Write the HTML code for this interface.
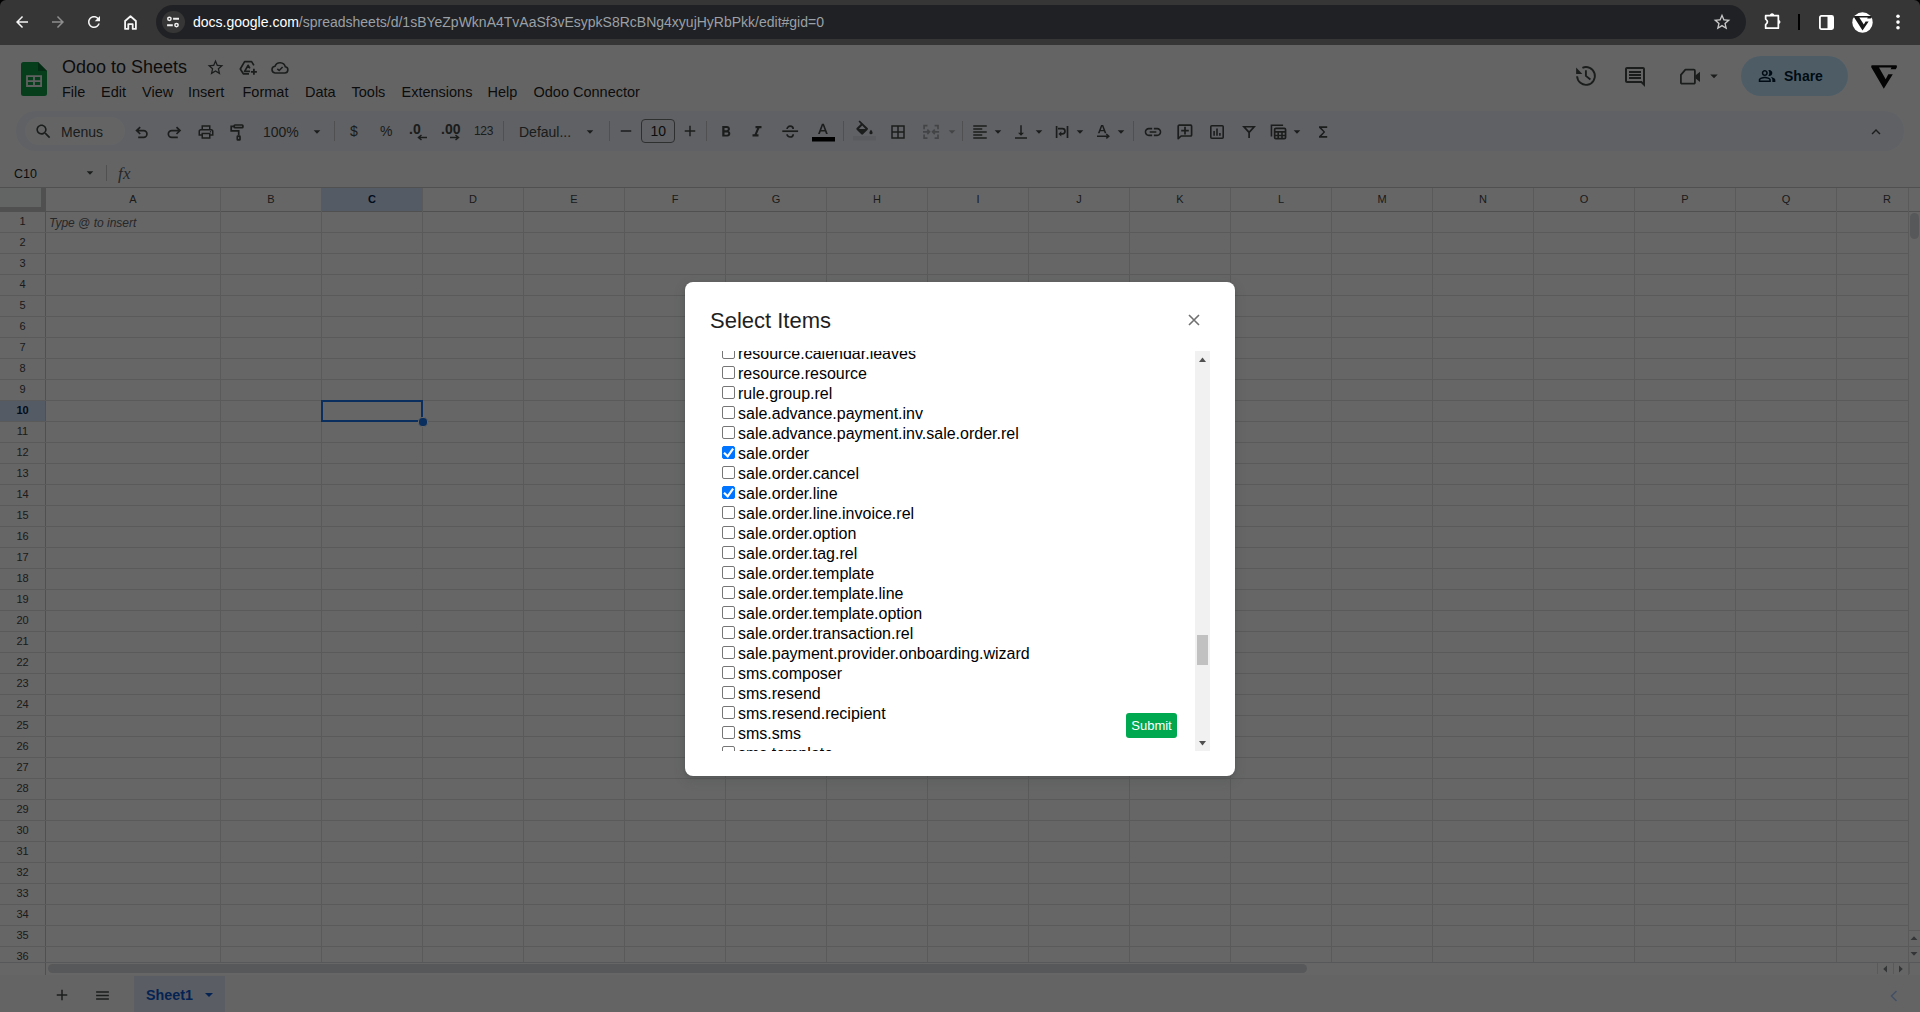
<!DOCTYPE html>
<html><head><meta charset="utf-8"><title>Odoo to Sheets</title>
<style>
*{box-sizing:border-box}
html,body{margin:0;padding:0}
body{width:1920px;height:1012px;overflow:hidden;position:relative;font-family:"Liberation Sans",sans-serif;background:#000}
.a{position:absolute}
svg{display:block}
.chrome{left:0;top:0;width:1920px;height:45px;background:#363636;border-radius:6px 6px 0 0}
.url{left:156px;top:5px;width:1590px;height:34px;border-radius:17px;background:#202124}
.app{left:0;top:44px;width:1920px;height:968px;background:#f9fbfd;overflow:hidden}
.ov{left:0;top:45px;width:1920px;height:967px;background:rgba(0,0,0,.6)}
.menu{top:44px;font-size:14px;color:#1f1f1f;line-height:20px}
.ic{fill:#444746}
.grid{left:0;top:187px;width:1908px;height:775px;overflow:hidden;background:#fff}
.ch{top:1px;height:23px;font-size:11px;color:#444;text-align:center;line-height:24px}
.rh{left:0;width:45px;height:20px;font-size:11px;color:#444;text-align:center;line-height:21px}
.dlg{left:685px;top:282px;width:550px;height:494px;background:#fff;border-radius:8px;box-shadow:0 1px 3px 0 rgba(60,64,67,.3),0 4px 8px 3px rgba(60,64,67,.15)}
.row{left:33px;height:20px;font-size:16px;color:#000;line-height:20px;white-space:nowrap}
.cb{position:absolute;left:4px;top:3px;width:13px;height:13px;border:1px solid #767676;border-radius:2px;background:#fff}
.cb.on{background:#0075ff;border-color:#0075ff}
.row span{position:absolute;left:20px;top:1px}
</style></head><body>
<!-- CHROME -->
<div class="a chrome">
  <svg class="a" style="left:13px;top:13px" width="18" height="18" viewBox="0 0 24 24"><path fill="#f5f5f5" d="M20 11H7.83l5.59-5.59L12 4l-8 8 8 8 1.41-1.41L7.83 13H20v-2z"/></svg>
  <svg class="a" style="left:49px;top:13px" width="18" height="18" viewBox="0 0 24 24"><path fill="#8e8e8e" d="M12 4l-1.41 1.41L16.17 11H4v2h12.17l-5.58 5.59L12 20l8-8z"/></svg>
  <svg class="a" style="left:85px;top:13px" width="18" height="18" viewBox="0 0 24 24"><path fill="#f5f5f5" d="M17.65 6.35C16.2 4.9 14.21 4 12 4c-4.42 0-7.99 3.58-7.99 8s3.57 8 7.99 8c3.73 0 6.84-2.55 7.73-6h-2.08c-.82 2.33-3.04 4-5.65 4-3.31 0-6-2.69-6-6s2.69-6 6-6c1.66 0 3.14.69 4.22 1.78L13 11h7V4l-2.35 2.35z"/></svg>
  <svg class="a" style="left:123.5px;top:14.5px" width="13" height="15" viewBox="0 0 13 15"><path fill="none" stroke="#f5f5f5" stroke-width="1.8" stroke-linejoin="round" d="M1.1 13.9V6L6.5 1.3 11.9 6v7.9H8.7V9.2H4.3v4.7z"/></svg>
  <div class="a url">
    <div class="a" style="left:6.3px;top:5.6px;width:22.4px;height:22.4px;border-radius:11.2px;background:#363636"></div>
    <svg class="a" style="left:10px;top:10px" width="14" height="14" viewBox="0 0 14 14"><g fill="none" stroke="#f0f0f0"><circle cx="3.4" cy="3.8" r="1.65" stroke-width="1.5"/><circle cx="10.5" cy="10.1" r="1.65" stroke-width="1.5"/><path stroke-width="2" d="M7.1 3.8H13M1.1 10.2H6.8"/></g></svg>
    <div class="a" style="left:37px;top:0;line-height:34px;font-size:14px;color:#9aa0a6;white-space:nowrap"><span style="color:#fff">docs.google.com</span>/spreadsheets/d/1sBYeZpWknA4TvAaSf3vEsypkS8RcBNg4xyujHyRbPkk/edit#gid=0</div>
    <svg class="a" style="left:1556px;top:6.5px" width="20" height="20" viewBox="0 0 24 24"><path fill="#c8c8c8" d="M22 9.24l-7.19-.62L12 2 9.19 8.63 2 9.24l5.46 4.73L5.82 21 12 17.27 18.18 21l-1.63-7.03L22 9.24zM12 15.4l-3.76 2.27 1-4.28-3.32-2.88 4.38-.38L12 6.1l1.71 4.04 4.38.38-3.32 2.88 1 4.28L12 15.4z"/></svg>
  </div>
  <svg class="a" style="left:1763px;top:12px" width="20" height="20" viewBox="0 0 20 20"><path fill="none" stroke="#fff" stroke-width="1.75" stroke-linejoin="round" d="M2.65 3.65H15.35V16.15H2.65V12.6Q6.2 9.85 2.65 7.1Z"/><path fill="#fff" d="M6.8 4A2.25 2.8 0 0 1 11.3 4ZM15.2 7.9A2.3 2.1 0 0 1 15.2 12.1Z"/></svg>
  <div class="a" style="left:1798px;top:14px;width:2px;height:16px;background:#000"></div>
  <svg class="a" style="left:1818.5px;top:14.7px" width="15" height="15" viewBox="0 0 15 15"><rect x="0.9" y="0.9" width="13.2" height="13.2" rx="1.5" fill="none" stroke="#fff" stroke-width="1.8"/><rect x="8.5" y="1" width="5.6" height="13" fill="#fff"/></svg>
  <svg class="a" style="left:1851.5px;top:11.8px" width="21" height="21" viewBox="0 0 21 21"><circle cx="10.5" cy="10.5" r="10.2" fill="#fff"/><g transform="translate(1.9 4) scale(0.68 0.61) translate(-11.1 -9.2)"><path fill="#1a1a1a" d="M11.6 9.2H36.6L37 10.9 35.8 13.2H30.6L31.5 11.5H19L25.7 23.3 28.3 18.2H32.8L23.8 32.8 11.1 11z"/></g></svg>
  <svg class="a" style="left:1895px;top:14px" width="6" height="16" viewBox="0 0 6 16"><circle cx="3" cy="2.3" r="1.8" fill="#fff"/><circle cx="3" cy="8.1" r="1.8" fill="#fff"/><circle cx="3" cy="13.7" r="1.8" fill="#fff"/></svg>
</div>

<!-- APP -->
<div class="a" style="left:0;top:45px;width:1920px;height:967px;background:#f9fbfd"></div>
<svg class="a" style="left:21px;top:62px" width="26" height="34" viewBox="0 0 26 34"><path fill="#109c48" d="M2.5 0H17l9 9v22.5a2.5 2.5 0 0 1-2.5 2.5h-21A2.5 2.5 0 0 1 0 31.5v-29A2.5 2.5 0 0 1 2.5 0z"/><path fill="#0a6b30" d="M17 0v9h9z"/><path fill="none" stroke="#f1f1f1" stroke-width="1.8" d="M6 14.2h14.1v9.8H6zM6 19.1h14.1M13 14.2v9.8"/></svg>
<div class="a" style="left:62px;top:58px;font-size:18px;line-height:18px;color:#1f1f1f;white-space:nowrap">Odoo to Sheets</div>
<svg class="a" style="left:206.3px;top:58.3px" width="19" height="19" viewBox="0 0 24 24"><path fill="#444746" d="M22 9.24l-7.19-.62L12 2 9.19 8.63 2 9.24l5.46 4.73L5.82 21 12 17.27 18.18 21l-1.63-7.03L22 9.24zM12 15.4l-3.76 2.27 1-4.28-3.32-2.88 4.38-.38L12 6.1l1.71 4.04 4.38.38-3.32 2.88 1 4.28L12 15.4z"/></svg>
<svg class="a" style="left:239px;top:59px" width="19" height="18" viewBox="0 0 19 18"><path fill="none" stroke="#444746" stroke-width="1.7" stroke-linejoin="round" d="M10 14.8H4.3L1.3 10 5.6 2.6H12.6L14.9 6.4M11 12.4H5.6L9.2 6.3 10.9 9.3"/><path stroke="#444746" stroke-width="1.8" d="M14.9 9.8v6M11.9 12.8h6"/></svg>
<svg class="a" style="left:270px;top:61px" width="20" height="14" viewBox="0 0 20 14"><path fill="none" stroke="#444746" stroke-width="1.6" d="M5 11.95H14.8A3.1 3.1 0 0 0 15.3 5.8A5.4 5.4 0 0 0 5 5.2A3.4 3.4 0 0 0 5 11.95Z"/><path fill="none" stroke="#444746" stroke-width="1.6" d="M7.3 7.8l1.9 1.7 3.4-3.5"/></svg>
<div class="a" style="left:62px;top:82px;font-size:14.5px;line-height:20px;color:#1f1f1f;white-space:nowrap">File</div>
<div class="a" style="left:101px;top:82px;font-size:14.5px;line-height:20px;color:#1f1f1f;white-space:nowrap">Edit</div>
<div class="a" style="left:142px;top:82px;font-size:14.5px;line-height:20px;color:#1f1f1f;white-space:nowrap">View</div>
<div class="a" style="left:188px;top:82px;font-size:14.5px;line-height:20px;color:#1f1f1f;white-space:nowrap">Insert</div>
<div class="a" style="left:242.5px;top:82px;font-size:14.5px;line-height:20px;color:#1f1f1f;white-space:nowrap">Format</div>
<div class="a" style="left:305px;top:82px;font-size:14.5px;line-height:20px;color:#1f1f1f;white-space:nowrap">Data</div>
<div class="a" style="left:351.5px;top:82px;font-size:14.5px;line-height:20px;color:#1f1f1f;white-space:nowrap">Tools</div>
<div class="a" style="left:401.5px;top:82px;font-size:14.5px;line-height:20px;color:#1f1f1f;white-space:nowrap">Extensions</div>
<div class="a" style="left:487.5px;top:82px;font-size:14.5px;line-height:20px;color:#1f1f1f;white-space:nowrap">Help</div>
<div class="a" style="left:533.5px;top:82px;font-size:14.5px;line-height:20px;color:#1f1f1f;white-space:nowrap">Odoo Connector</div>
<svg class="a" style="left:1574px;top:64px" width="24" height="24" viewBox="0 0 24 24"><path fill="none" stroke="#444746" stroke-width="1.9" d="M3.1 12.3A8.9 8.9 0 1 0 8.4 3.8M11.9 6.2v5.7l4.5 3.6"/><path fill="#444746" d="M2.1 3.6L2.1 10H8.4z"/></svg>
<svg class="a" style="left:1623px;top:65px" width="24" height="24" viewBox="0 0 24 24"><path fill="#444746" d="M21.99 4c0-1.1-.89-2-1.99-2H4c-1.1 0-2 .9-2 2v12c0 1.1.9 2 2 2h14l4 4-.01-18zM20 4v13.17L18.83 16H4V4h16zM6 12h12v2H6zm0-3h12v2H6zm0-3h12v2H6z"/></svg>
<svg class="a" style="left:1679px;top:67px" width="22" height="18" viewBox="0 0 22 18"><path fill="none" stroke="#444746" stroke-width="1.8" stroke-linejoin="round" d="M1.9 7.9L6.4 2.65H14.9A1 1 0 0 1 15.9 3.65V15.7A1 1 0 0 1 14.9 16.7H2.9A1 1 0 0 1 1.9 15.7Z"/><path fill="#444746" d="M16.3 8.6L21 4.7V15.1L16.3 11.2Z"/></svg>
<svg class="a" style="left:1705px;top:67px" width="18" height="18" viewBox="0 0 24 24"><path fill="#444746" d="M7 10l5 5 5-5z"/></svg>
<div class="a" style="left:1741px;top:56px;width:107px;height:40px;border-radius:20px;background:#c2e7ff"></div>
<svg class="a" style="left:1758.1px;top:66.9px" width="18.1" height="18.1" viewBox="0 0 24 24"><path fill="#001d35" d="M16.67 13.13C18.04 14.06 19 15.32 19 17v3h4v-3c0-2.18-3.57-3.47-6.33-3.87zM15 12c2.21 0 4-1.79 4-4s-1.79-4-4-4c-.47 0-.91.1-1.33.24C14.5 5.27 15 6.58 15 8s-.5 2.73-1.33 3.76c.42.14.86.24 1.33.24zm-6 0c2.21 0 4-1.79 4-4s-1.79-4-4-4-4 1.79-4 4 1.79 4 4 4zm0-6c1.1 0 2 .9 2 2s-.9 2-2 2-2-.9-2-2 .9-2 2-2zm0 7c-2.67 0-8 1.34-8 4v3h16v-3c0-2.66-5.33-4-8-4zm6 5H3v-.99C3.2 16.29 6.3 15 9 15s5.8 1.29 6 2v1z"/></svg>
<div class="a" style="left:1784px;top:66px;font-size:14px;line-height:20px;color:#001d35;font-weight:bold;white-space:nowrap">Share</div>
<svg class="a" style="left:1860px;top:56px" width="50" height="40" viewBox="0 0 50 40"><path fill="#0c0c0c" d="M11.6 9.2H36.6L37 10.9 35.8 13.2H30.6L31.5 11.5H19L25.7 23.3 28.3 18.2H32.8L23.8 32.8 11.1 11z"/></svg>
<div class="a" style="left:16px;top:111px;width:1888px;height:40px;border-radius:20px;background:#edf2fa"></div>
<div class="a" style="left:25px;top:117px;width:100px;height:28px;border-radius:14px;background:#f9fbfd"></div>
<svg class="a" style="left:33.5px;top:121.5px" width="19" height="19" viewBox="0 0 24 24"><path fill="#444746" d="M15.5 14h-.79l-.28-.27C15.41 12.59 16 11.11 16 9.5 16 5.91 13.09 3 9.5 3S3 5.91 3 9.5 5.91 16 9.5 16c1.61 0 3.09-.59 4.23-1.57l.27.28v.79l5 4.99L20.49 19l-4.99-5zm-6 0C7.01 14 5 11.99 5 9.5S7.01 5 9.5 5 14 7.01 14 9.5 11.99 14 9.5 14z"/></svg>
<div class="a" style="left:61px;top:124.5px;font-size:14px;line-height:14px;color:#444746;white-space:nowrap;">Menus</div>
<svg class="a" style="left:134px;top:124px" width="16" height="16" viewBox="0 0 16 16"><path fill="none" stroke="#444746" stroke-width="1.7" d="M6.2 3.2L2.6 6.6 6.2 10M2.6 6.6H9.6A3.35 3.35 0 0 1 9.6 13.3H4.2"/></svg>
<svg class="a" style="left:166px;top:124px" width="16" height="16" viewBox="0 0 16 16"><path fill="none" stroke="#444746" stroke-width="1.7" d="M10.5 3.2L14 6.6 10.5 10M14 6.6H5.7A3.35 3.35 0 0 0 5.7 13.3H11.8"/></svg>
<svg class="a" style="left:197.0px;top:123.0px" width="18" height="18" viewBox="0 0 24 24"><path fill="#444746" d="M19 8h-1V3H6v5H5c-1.66 0-3 1.34-3 3v6h4v4h12v-4h4v-6c0-1.66-1.34-3-3-3zM8 5h8v3H8V5zm8 14H8v-4h8v4zm4-4h-2v-2H6v2H4v-4c0-.55.45-1 1-1h14c.55 0 1 .45 1 1v4z"/><circle cx="18" cy="11.5" r="1" fill="#444746"/></svg>
<svg class="a" style="left:230px;top:123px" width="15" height="19" viewBox="0 0 15 19"><rect x="4.2" y="2" width="8.7" height="2.7" rx="0.8" fill="none" stroke="#444746" stroke-width="1.7"/><path fill="none" stroke="#444746" stroke-width="1.7" d="M4.2 3.3H1.2V7.9H8.7V12.3"/><rect x="7.3" y="13.2" width="2.7" height="3.7" rx="0.5" fill="none" stroke="#444746" stroke-width="1.7"/></svg>
<div class="a" style="left:263px;top:125px;font-size:14px;line-height:14px;color:#444746;white-space:nowrap;">100%</div>
<svg class="a" style="left:309.0px;top:124px" width="16" height="16" viewBox="0 0 24 24"><path fill="#444746" d="M7 9.5l5 5 5-5z"/></svg>
<div class="a" style="left:334px;top:121px;width:1px;height:20px;background:#c7c7c7"></div>
<div class="a" style="left:350px;top:124px;font-size:14px;line-height:14px;color:#444746;white-space:nowrap;">$</div>
<div class="a" style="left:380px;top:124px;font-size:14px;line-height:14px;color:#444746;white-space:nowrap;">%</div>
<div class="a" style="left:409px;top:122px;font-size:14px;line-height:14px;color:#444746;white-space:nowrap;font-weight:bold">.0</div>
<svg class="a" style="left:417px;top:134px" width="10" height="7" viewBox="0 0 10 7"><path fill="none" stroke="#444746" stroke-width="1.5" d="M10 3.5H2M4.5 1L1.5 3.5 4.5 6"/></svg>
<div class="a" style="left:441px;top:122px;font-size:14px;line-height:14px;color:#444746;white-space:nowrap;font-weight:bold">.00</div>
<svg class="a" style="left:450px;top:134px" width="10" height="7" viewBox="0 0 10 7"><path fill="none" stroke="#444746" stroke-width="1.5" d="M0 3.5h8M5.5 1l3 2.5-3 2.5"/></svg>
<div class="a" style="left:474px;top:125px;font-size:12px;line-height:12px;color:#444746;white-space:nowrap;letter-spacing:-.3px">123</div>
<div class="a" style="left:503px;top:121px;width:1px;height:20px;background:#c7c7c7"></div>
<div class="a" style="left:519px;top:124.5px;font-size:14px;line-height:14px;color:#444746;white-space:nowrap;">Defaul...</div>
<svg class="a" style="left:582.0px;top:124px" width="16" height="16" viewBox="0 0 24 24"><path fill="#444746" d="M7 9.5l5 5 5-5z"/></svg>
<div class="a" style="left:609px;top:121px;width:1px;height:20px;background:#c7c7c7"></div>
<svg class="a" style="left:617.0px;top:122.0px" width="18" height="18" viewBox="0 0 24 24"><path fill="#444746" d="M19 13H5v-2h14v2z"/></svg>
<div class="a" style="left:641px;top:119px;width:34px;height:24px;border:1px solid #747775;border-radius:4px"></div>
<div class="a" style="left:650.5px;top:124.2px;font-size:14px;line-height:14px;color:#1f1f1f;white-space:nowrap;">10</div>
<svg class="a" style="left:681.0px;top:122.0px" width="18" height="18" viewBox="0 0 24 24"><path fill="#444746" d="M19 13h-6v6h-2v-6H5v-2h6V5h2v6h6v2z"/></svg>
<div class="a" style="left:706px;top:121px;width:1px;height:20px;background:#c7c7c7"></div>
<svg class="a" style="left:717.0px;top:123.0px" width="18" height="18" viewBox="0 0 24 24"><path fill="#444746" d="M15.6 10.79c.97-.67 1.65-1.77 1.65-2.79 0-2.26-1.75-4-4-4H7v14h7.04c2.09 0 3.71-1.7 3.71-3.79 0-1.52-.86-2.82-2.15-3.42zM10 6.5h3c.83 0 1.5.67 1.5 1.5s-.67 1.5-1.5 1.5h-3v-3zm3.5 9H10v-3h3.5c.83 0 1.5.67 1.5 1.5s-.67 1.5-1.5 1.5z"/></svg>
<svg class="a" style="left:748.0px;top:123.0px" width="18" height="18" viewBox="0 0 24 24"><path fill="#444746" d="M10 4v3h2.21l-3.42 8H6v3h8v-3h-2.21l3.42-8H18V4z"/></svg>
<svg class="a" style="left:782px;top:123px" width="17" height="18" viewBox="0 0 17 18"><path fill="none" stroke="#444746" stroke-width="1.7" d="M0.3 8.2h15.8"/><path fill="none" stroke="#444746" stroke-width="1.7" d="M5.1 6a3.05 2.8 0 0 1 6.1 0M5.1 11.2a3.05 2.8 0 0 0 6.1 0"/></svg>
<svg class="a" style="left:812px;top:121px" width="23" height="21" viewBox="0 0 23 21"><path fill="#444746" d="M9.9 2.8h2L15.8 13h-1.8l-0.95-2.6H8.75L7.8 13H6zM9.3 8.9h3.2L10.9 4.5z"/><rect x="0" y="16" width="23" height="4.5" fill="#000"/></svg>
<div class="a" style="left:843px;top:121px;width:1px;height:20px;background:#c7c7c7"></div>
<svg class="a" style="left:853px;top:120px" width="23" height="21" viewBox="0 0 23 21"><path transform="translate(2.5 0)" fill="#444746" d="M4.2 0.4L3 1.6 5.3 3.9 1.2 8a1.2 1.2 0 0 0 0 1.7l4.6 4.6a1.2 1.2 0 0 0 1.7 0l4.6-4.6a1.2 1.2 0 0 0 0-1.7zM3.4 8.9l3.3-3.3 3.3 3.3zM15.5 9.8s-1.6 1.8-1.6 2.9a1.6 1.6 0 0 0 3.2 0c0-1.1-1.6-2.9-1.6-2.9z"/><rect x="0" y="16" width="23" height="4.5" fill="#e0e4ea"/></svg>
<svg class="a" style="left:889.0px;top:123.0px" width="18" height="18" viewBox="0 0 24 24"><path fill="#444746" d="M3 3v18h18V3H3zm8 16H5v-6h6v6zm0-8H5V5h6v6zm8 8h-6v-6h6v6zm0-8h-6V5h6v6z"/></svg>
<svg class="a" style="left:921px;top:123px" width="20" height="18" viewBox="0 0 20 18"><path fill="none" stroke="#a8abb0" stroke-width="1.7" d="M6.5 2.6H3.1V6.3M3.1 11.4V15.1H6.5M13.6 2.6H17V6.3M17 11.4V15.1H13.6M2 8.85H8.3M6.3 6.6L8.5 8.85 6.3 11.1M18.1 8.85H11.8M13.8 6.6L11.6 8.85 13.8 11.1"/></svg>
<svg class="a" style="left:944.0px;top:124px" width="16" height="16" viewBox="0 0 24 24"><path fill="#a8abb0" d="M7 9.5l5 5 5-5z"/></svg>
<div class="a" style="left:962px;top:121px;width:1px;height:20px;background:#c7c7c7"></div>
<svg class="a" style="left:971px;top:123px" width="18" height="18" viewBox="0 0 24 24"><path fill="#444746" d="M15 15H3v2h12v-2zm0-8H3v2h12V7zM3 13h18v-2H3v2zm0 8h18v-2H3v2zM3 3v2h18V3H3z"/></svg>
<svg class="a" style="left:989.5px;top:124px" width="16" height="16" viewBox="0 0 24 24"><path fill="#444746" d="M7 9.5l5 5 5-5z"/></svg>
<svg class="a" style="left:1012.0px;top:123.0px" width="18" height="18" viewBox="0 0 24 24"><path fill="#444746" d="M16 13h-3V3h-2v10H8l4 4 4-4zM4 19v2h16v-2H4z"/></svg>
<svg class="a" style="left:1031.0px;top:124px" width="16" height="16" viewBox="0 0 24 24"><path fill="#444746" d="M7 9.5l5 5 5-5z"/></svg>
<svg class="a" style="left:1054px;top:124px" width="16" height="16" viewBox="0 0 16 16"><path fill="none" stroke="#444746" stroke-width="1.7" d="M2.6 1.9V13.9M13.5 1.9V13.9M4 4.7H8.4A2.6 2.6 0 0 1 8.4 9.9H6.5"/><path fill="#444746" d="M4.4 9.9L7.3 7.2V12.6Z"/></svg>
<svg class="a" style="left:1072.0px;top:124px" width="16" height="16" viewBox="0 0 24 24"><path fill="#444746" d="M7 9.5l5 5 5-5z"/></svg>
<svg class="a" style="left:1096px;top:124px" width="15" height="17" viewBox="0 0 15 17"><path fill="#444746" d="M5.1 1H7.2L10.4 9.3H8.7L8 7.3H4.3L3.6 9.3H1.9ZM4.8 5.9H7.5L6.15 2.3Z"/><path fill="none" stroke="#444746" stroke-width="1.5" d="M1 12.2H12.5M10.3 10L12.8 12.2 10.3 14.4"/></svg>
<svg class="a" style="left:1113.0px;top:124px" width="16" height="16" viewBox="0 0 24 24"><path fill="#444746" d="M7 9.5l5 5 5-5z"/></svg>
<div class="a" style="left:1133px;top:121px;width:1px;height:20px;background:#c7c7c7"></div>
<svg class="a" style="left:1143.0px;top:122.0px" width="20" height="20" viewBox="0 0 24 24"><path fill="#444746" d="M3.9 12c0-1.71 1.39-3.1 3.1-3.1h4V7H7c-2.76 0-5 2.24-5 5s2.24 5 5 5h4v-1.9H7c-1.71 0-3.1-1.39-3.1-3.1zM8 13h8v-2H8v2zm9-6h-4v1.9h4c1.71 0 3.1 1.39 3.1 3.1s-1.39 3.1-3.1 3.1h-4V17h4c2.76 0 5-2.24 5-5s-2.24-5-5-5z"/></svg>
<svg class="a" style="left:1177px;top:124px" width="16" height="16" viewBox="0 0 16 16"><path fill="none" stroke="#444746" stroke-width="1.7" stroke-linejoin="round" d="M1.2 14.7V2.2A1 1 0 0 1 2.2 1.2H13.6A1 1 0 0 1 14.6 2.2V11A1 1 0 0 1 13.6 12H4.1z"/><path stroke="#444746" stroke-width="1.7" d="M8 2.8v7.6M4.2 6.6h7.6"/></svg>
<svg class="a" style="left:1210px;top:125px" width="14" height="14" viewBox="0 0 14 14"><rect x="0.8" y="0.8" width="12.4" height="12.4" rx="1" fill="none" stroke="#444746" stroke-width="1.6"/><path fill="#444746" d="M3.3 6h1.6v4.8H3.3zM6.2 3.6h1.6v7.2H6.2zM9.1 8h1.6v2.8H9.1z"/></svg>
<svg class="a" style="left:1242px;top:125px" width="14" height="14" viewBox="0 0 14 14"><path fill="none" stroke="#444746" stroke-width="1.7" d="M1.95 1.75h10.3L7.1 7.4zM7.1 7v5.9"/></svg>
<svg class="a" style="left:1270px;top:123px" width="17" height="18" viewBox="0 0 17 18"><path fill="none" stroke="#444746" stroke-width="1.6" d="M1.45 13.4V2.25H13.1"/><rect x="4.65" y="5.35" width="10.9" height="10.3" rx="1.2" fill="none" stroke="#444746" stroke-width="1.7"/><path stroke="#444746" stroke-width="1.6" d="M4.65 8.9h10.9M4.65 12.5h10.9M8.2 8.9v6.7M12 8.9v6.7"/></svg>
<svg class="a" style="left:1289.0px;top:124px" width="16" height="16" viewBox="0 0 24 24"><path fill="#444746" d="M7 9.5l5 5 5-5z"/></svg>
<svg class="a" style="left:1315px;top:124px" width="16" height="16" viewBox="0 0 16 16"><path fill="#444746" d="M12.2 2.2H4v1.6l4.4 4.2L4 12.2v1.6h8.2v-1.7H6.6l3.6-4.1-3.6-4.1h5.6z"/></svg>
<svg class="a" style="left:1867.0px;top:123.0px" width="18" height="18" viewBox="0 0 24 24"><path fill="#444746" d="M12 8l-6 6 1.41 1.41L12 10.83l4.59 4.58L18 14z"/></svg>
<div class="a" style="left:14px;top:167.5px;font-size:12.5px;line-height:12.5px;color:#1f1f1f;white-space:nowrap;">C10</div>
<svg class="a" style="left:82.0px;top:165px" width="16" height="16" viewBox="0 0 24 24"><path fill="#444746" d="M7 9.5l5 5 5-5z"/></svg>
<div class="a" style="left:106px;top:165px;width:1px;height:16px;background:#c7c7c7"></div>
<div class="a" style="left:118px;top:165px;font-size:17px;line-height:17px;color:#5f6368;white-space:nowrap;font-family:'Liberation Serif',serif;font-style:italic;letter-spacing:0.3px">fx</div>
<div class="a" style="left:0;top:187px;width:1920px;height:788px;background:#fff"></div>
<div class="a" style="left:0;top:188px;width:41px;height:19px;background:#f8f9fa"></div>
<div class="a" style="left:322px;top:188px;width:100px;height:23px;background:#d3e3fd"></div>
<div class="a" style="left:0;top:401px;width:45px;height:20px;background:#d3e3fd"></div>
<div class="a" style="left:41px;top:188px;width:4px;height:23px;background:#c7c7c7"></div>
<div class="a" style="left:0;top:207px;width:45px;height:4px;background:#c7c7c7"></div>
<svg class="a" style="left:0px;top:187px" width="1920" height="788" viewBox="0 0 1920 788"><rect x="0" y="0" width="1920" height="1" fill="#c7c7c7"/><rect x="0" y="24" width="1920" height="1" fill="#c7c7c7"/><rect x="45" y="1" width="1" height="774" fill="#e1e1e1"/><rect x="220" y="1" width="1" height="774" fill="#e1e1e1"/><rect x="321" y="1" width="1" height="774" fill="#e1e1e1"/><rect x="422" y="1" width="1" height="774" fill="#e1e1e1"/><rect x="523" y="1" width="1" height="774" fill="#e1e1e1"/><rect x="624" y="1" width="1" height="774" fill="#e1e1e1"/><rect x="725" y="1" width="1" height="774" fill="#e1e1e1"/><rect x="826" y="1" width="1" height="774" fill="#e1e1e1"/><rect x="927" y="1" width="1" height="774" fill="#e1e1e1"/><rect x="1028" y="1" width="1" height="774" fill="#e1e1e1"/><rect x="1129" y="1" width="1" height="774" fill="#e1e1e1"/><rect x="1230" y="1" width="1" height="774" fill="#e1e1e1"/><rect x="1331" y="1" width="1" height="774" fill="#e1e1e1"/><rect x="1432" y="1" width="1" height="774" fill="#e1e1e1"/><rect x="1533" y="1" width="1" height="774" fill="#e1e1e1"/><rect x="1634" y="1" width="1" height="774" fill="#e1e1e1"/><rect x="1735" y="1" width="1" height="774" fill="#e1e1e1"/><rect x="1836" y="1" width="1" height="774" fill="#e1e1e1"/><rect x="45" y="1" width="1" height="787" fill="#c7c7c7"/><rect x="1908" y="1" width="1" height="787" fill="#e1e1e1"/><rect x="0" y="45" width="1908" height="1" fill="#e1e1e1"/><rect x="0" y="66" width="1908" height="1" fill="#e1e1e1"/><rect x="0" y="87" width="1908" height="1" fill="#e1e1e1"/><rect x="0" y="108" width="1908" height="1" fill="#e1e1e1"/><rect x="0" y="129" width="1908" height="1" fill="#e1e1e1"/><rect x="0" y="150" width="1908" height="1" fill="#e1e1e1"/><rect x="0" y="171" width="1908" height="1" fill="#e1e1e1"/><rect x="0" y="192" width="1908" height="1" fill="#e1e1e1"/><rect x="0" y="213" width="1908" height="1" fill="#e1e1e1"/><rect x="0" y="234" width="1908" height="1" fill="#e1e1e1"/><rect x="0" y="255" width="1908" height="1" fill="#e1e1e1"/><rect x="0" y="276" width="1908" height="1" fill="#e1e1e1"/><rect x="0" y="297" width="1908" height="1" fill="#e1e1e1"/><rect x="0" y="318" width="1908" height="1" fill="#e1e1e1"/><rect x="0" y="339" width="1908" height="1" fill="#e1e1e1"/><rect x="0" y="360" width="1908" height="1" fill="#e1e1e1"/><rect x="0" y="381" width="1908" height="1" fill="#e1e1e1"/><rect x="0" y="402" width="1908" height="1" fill="#e1e1e1"/><rect x="0" y="423" width="1908" height="1" fill="#e1e1e1"/><rect x="0" y="444" width="1908" height="1" fill="#e1e1e1"/><rect x="0" y="465" width="1908" height="1" fill="#e1e1e1"/><rect x="0" y="486" width="1908" height="1" fill="#e1e1e1"/><rect x="0" y="507" width="1908" height="1" fill="#e1e1e1"/><rect x="0" y="528" width="1908" height="1" fill="#e1e1e1"/><rect x="0" y="549" width="1908" height="1" fill="#e1e1e1"/><rect x="0" y="570" width="1908" height="1" fill="#e1e1e1"/><rect x="0" y="591" width="1908" height="1" fill="#e1e1e1"/><rect x="0" y="612" width="1908" height="1" fill="#e1e1e1"/><rect x="0" y="633" width="1908" height="1" fill="#e1e1e1"/><rect x="0" y="654" width="1908" height="1" fill="#e1e1e1"/><rect x="0" y="675" width="1908" height="1" fill="#e1e1e1"/><rect x="0" y="696" width="1908" height="1" fill="#e1e1e1"/><rect x="0" y="717" width="1908" height="1" fill="#e1e1e1"/><rect x="0" y="738" width="1908" height="1" fill="#e1e1e1"/><rect x="0" y="759" width="1908" height="1" fill="#e1e1e1"/><rect x="0" y="775" width="1920" height="1" fill="#dadce0"/><rect x="0" y="788" width="1920" height="1" fill="#dadce0"/></svg>
<div class="a" style="left:46px;top:192px;width:174px;text-align:center;font-size:11px;line-height:14px;color:#444">A</div>
<div class="a" style="left:221px;top:192px;width:100px;text-align:center;font-size:11px;line-height:14px;color:#444">B</div>
<div class="a" style="left:322px;top:192px;width:100px;text-align:center;font-size:11px;line-height:14px;color:#041e49;font-weight:bold">C</div>
<div class="a" style="left:423px;top:192px;width:100px;text-align:center;font-size:11px;line-height:14px;color:#444">D</div>
<div class="a" style="left:524px;top:192px;width:100px;text-align:center;font-size:11px;line-height:14px;color:#444">E</div>
<div class="a" style="left:625px;top:192px;width:100px;text-align:center;font-size:11px;line-height:14px;color:#444">F</div>
<div class="a" style="left:726px;top:192px;width:100px;text-align:center;font-size:11px;line-height:14px;color:#444">G</div>
<div class="a" style="left:827px;top:192px;width:100px;text-align:center;font-size:11px;line-height:14px;color:#444">H</div>
<div class="a" style="left:928px;top:192px;width:100px;text-align:center;font-size:11px;line-height:14px;color:#444">I</div>
<div class="a" style="left:1029px;top:192px;width:100px;text-align:center;font-size:11px;line-height:14px;color:#444">J</div>
<div class="a" style="left:1130px;top:192px;width:100px;text-align:center;font-size:11px;line-height:14px;color:#444">K</div>
<div class="a" style="left:1231px;top:192px;width:100px;text-align:center;font-size:11px;line-height:14px;color:#444">L</div>
<div class="a" style="left:1332px;top:192px;width:100px;text-align:center;font-size:11px;line-height:14px;color:#444">M</div>
<div class="a" style="left:1433px;top:192px;width:100px;text-align:center;font-size:11px;line-height:14px;color:#444">N</div>
<div class="a" style="left:1534px;top:192px;width:100px;text-align:center;font-size:11px;line-height:14px;color:#444">O</div>
<div class="a" style="left:1635px;top:192px;width:100px;text-align:center;font-size:11px;line-height:14px;color:#444">P</div>
<div class="a" style="left:1736px;top:192px;width:100px;text-align:center;font-size:11px;line-height:14px;color:#444">Q</div>
<div class="a" style="left:1837px;top:192px;width:100px;text-align:center;font-size:11px;line-height:14px;color:#444">R</div>
<div class="a" style="left:0;top:214px;width:45px;text-align:center;font-size:11px;line-height:14px;color:#444">1</div>
<div class="a" style="left:0;top:235px;width:45px;text-align:center;font-size:11px;line-height:14px;color:#444">2</div>
<div class="a" style="left:0;top:256px;width:45px;text-align:center;font-size:11px;line-height:14px;color:#444">3</div>
<div class="a" style="left:0;top:277px;width:45px;text-align:center;font-size:11px;line-height:14px;color:#444">4</div>
<div class="a" style="left:0;top:298px;width:45px;text-align:center;font-size:11px;line-height:14px;color:#444">5</div>
<div class="a" style="left:0;top:319px;width:45px;text-align:center;font-size:11px;line-height:14px;color:#444">6</div>
<div class="a" style="left:0;top:340px;width:45px;text-align:center;font-size:11px;line-height:14px;color:#444">7</div>
<div class="a" style="left:0;top:361px;width:45px;text-align:center;font-size:11px;line-height:14px;color:#444">8</div>
<div class="a" style="left:0;top:382px;width:45px;text-align:center;font-size:11px;line-height:14px;color:#444">9</div>
<div class="a" style="left:0;top:403px;width:45px;text-align:center;font-size:11px;line-height:14px;color:#041e49;font-weight:bold">10</div>
<div class="a" style="left:0;top:424px;width:45px;text-align:center;font-size:11px;line-height:14px;color:#444">11</div>
<div class="a" style="left:0;top:445px;width:45px;text-align:center;font-size:11px;line-height:14px;color:#444">12</div>
<div class="a" style="left:0;top:466px;width:45px;text-align:center;font-size:11px;line-height:14px;color:#444">13</div>
<div class="a" style="left:0;top:487px;width:45px;text-align:center;font-size:11px;line-height:14px;color:#444">14</div>
<div class="a" style="left:0;top:508px;width:45px;text-align:center;font-size:11px;line-height:14px;color:#444">15</div>
<div class="a" style="left:0;top:529px;width:45px;text-align:center;font-size:11px;line-height:14px;color:#444">16</div>
<div class="a" style="left:0;top:550px;width:45px;text-align:center;font-size:11px;line-height:14px;color:#444">17</div>
<div class="a" style="left:0;top:571px;width:45px;text-align:center;font-size:11px;line-height:14px;color:#444">18</div>
<div class="a" style="left:0;top:592px;width:45px;text-align:center;font-size:11px;line-height:14px;color:#444">19</div>
<div class="a" style="left:0;top:613px;width:45px;text-align:center;font-size:11px;line-height:14px;color:#444">20</div>
<div class="a" style="left:0;top:634px;width:45px;text-align:center;font-size:11px;line-height:14px;color:#444">21</div>
<div class="a" style="left:0;top:655px;width:45px;text-align:center;font-size:11px;line-height:14px;color:#444">22</div>
<div class="a" style="left:0;top:676px;width:45px;text-align:center;font-size:11px;line-height:14px;color:#444">23</div>
<div class="a" style="left:0;top:697px;width:45px;text-align:center;font-size:11px;line-height:14px;color:#444">24</div>
<div class="a" style="left:0;top:718px;width:45px;text-align:center;font-size:11px;line-height:14px;color:#444">25</div>
<div class="a" style="left:0;top:739px;width:45px;text-align:center;font-size:11px;line-height:14px;color:#444">26</div>
<div class="a" style="left:0;top:760px;width:45px;text-align:center;font-size:11px;line-height:14px;color:#444">27</div>
<div class="a" style="left:0;top:781px;width:45px;text-align:center;font-size:11px;line-height:14px;color:#444">28</div>
<div class="a" style="left:0;top:802px;width:45px;text-align:center;font-size:11px;line-height:14px;color:#444">29</div>
<div class="a" style="left:0;top:823px;width:45px;text-align:center;font-size:11px;line-height:14px;color:#444">30</div>
<div class="a" style="left:0;top:844px;width:45px;text-align:center;font-size:11px;line-height:14px;color:#444">31</div>
<div class="a" style="left:0;top:865px;width:45px;text-align:center;font-size:11px;line-height:14px;color:#444">32</div>
<div class="a" style="left:0;top:886px;width:45px;text-align:center;font-size:11px;line-height:14px;color:#444">33</div>
<div class="a" style="left:0;top:907px;width:45px;text-align:center;font-size:11px;line-height:14px;color:#444">34</div>
<div class="a" style="left:0;top:928px;width:45px;text-align:center;font-size:11px;line-height:14px;color:#444">35</div>
<div class="a" style="left:0;top:949px;width:45px;text-align:center;font-size:11px;line-height:14px;color:#444">36</div>
<div class="a" style="left:49px;top:216px;font-size:12px;line-height:14px;color:#5f6368;font-style:italic;white-space:nowrap">Type @ to insert</div>
<div class="a" style="left:321px;top:400px;width:102px;height:22px;border:2px solid #1a73e8"></div>
<div class="a" style="left:419px;top:418px;width:8px;height:8px;border-radius:4px;background:#1a73e8;border:1px solid #fff;box-sizing:content-box;margin:-1px"></div>
<div class="a" style="left:1910px;top:213px;width:9px;height:26px;border-radius:5px;background:#dadce0"></div>
<div class="a" style="left:1908px;top:930px;width:12px;height:1px;background:#e1e1e1"></div>
<div class="a" style="left:1908px;top:946px;width:12px;height:1px;background:#e1e1e1"></div>
<svg class="a" style="left:1910px;top:934.5px" width="8" height="6" viewBox="0 0 8 6"><path fill="#80868b" d="M0.5 5L4 1.2 7.5 5z"/></svg>
<svg class="a" style="left:1910px;top:951px" width="8" height="6" viewBox="0 0 8 6"><path fill="#80868b" d="M0.5 1L4 4.8 7.5 1z"/></svg>
<div class="a" style="left:48px;top:964px;width:1259px;height:9px;border-radius:5px;background:#dadce0"></div>
<div class="a" style="left:1877px;top:963px;width:1px;height:11px;background:#e1e1e1"></div>
<div class="a" style="left:1893px;top:963px;width:1px;height:11px;background:#e1e1e1"></div>
<div class="a" style="left:1909px;top:963px;width:1px;height:11px;background:#e1e1e1"></div>
<svg class="a" style="left:1882px;top:964.5px" width="6" height="8" viewBox="0 0 6 8"><path fill="#80868b" d="M5 0.5L1.2 4 5 7.5z"/></svg>
<svg class="a" style="left:1898px;top:964.5px" width="6" height="8" viewBox="0 0 6 8"><path fill="#80868b" d="M1 0.5L4.8 4 1 7.5z"/></svg>
<div class="a" style="left:0;top:975px;width:1920px;height:37px;background:#f9fbfd"></div>
<svg class="a" style="left:53px;top:986px" width="18" height="18" viewBox="0 0 24 24"><path fill="#444746" d="M19 13h-6v6h-2v-6H5v-2h6V5h2v6h6v2z"/></svg>
<svg class="a" style="left:93.5px;top:986.5px" width="17" height="17" viewBox="0 0 24 24"><path fill="#444746" d="M3 18h18v-2H3v2zm0-5h18v-2H3v2zm0-7v2h18V6H3z"/></svg>
<div class="a" style="left:134px;top:976px;width:91px;height:36px;background:#e1e9f7"></div>
<div class="a" style="left:146px;top:988px;font-size:14.3px;line-height:14px;color:#0b57d0;font-weight:bold;white-space:nowrap">Sheet1</div>
<svg class="a" style="left:201px;top:987px" width="16" height="16" viewBox="0 0 24 24"><path fill="#0b57d0" d="M6 9l6 6 6-6z"/></svg>
<svg class="a" style="left:1887px;top:988px" width="14" height="16" viewBox="0 0 14 16"><path fill="none" stroke="#a8c7fa" stroke-width="1.6" d="M9.5 3L4.5 8l5 5"/></svg>
<!-- APPEND -->


<div class="a ov"></div>

<!-- DIALOG -->
<div class="a dlg">
<div class="a" style="left:25px;top:27px;font-size:22px;line-height:24px;color:#1f1f1f;white-space:nowrap">Select Items</div>
<svg class="a" style="left:503px;top:32px" width="12" height="12" viewBox="0 0 12 12"><path stroke="#707070" stroke-width="1.6" d="M1 1l10 10M11 1L1 11"/></svg>
<div class="a" style="left:0;top:69px;width:550px;height:400px;overflow:hidden">
<div class="a row" style="left:33px;top:-8px"><div class="cb"></div><span>resource.calendar.leaves</span></div>
<div class="a row" style="left:33px;top:12px"><div class="cb"></div><span>resource.resource</span></div>
<div class="a row" style="left:33px;top:32px"><div class="cb"></div><span>rule.group.rel</span></div>
<div class="a row" style="left:33px;top:52px"><div class="cb"></div><span>sale.advance.payment.inv</span></div>
<div class="a row" style="left:33px;top:72px"><div class="cb"></div><span>sale.advance.payment.inv.sale.order.rel</span></div>
<div class="a row" style="left:33px;top:92px"><div class="cb on"><svg width="13" height="13" viewBox="0 0 13 13" style="position:absolute;left:-1px;top:-1px"><path fill="none" stroke="#fff" stroke-width="2.2" d="M2 6.7l3.7 3.6 5.4-7.7"/></svg></div><span>sale.order</span></div>
<div class="a row" style="left:33px;top:112px"><div class="cb"></div><span>sale.order.cancel</span></div>
<div class="a row" style="left:33px;top:132px"><div class="cb on"><svg width="13" height="13" viewBox="0 0 13 13" style="position:absolute;left:-1px;top:-1px"><path fill="none" stroke="#fff" stroke-width="2.2" d="M2 6.7l3.7 3.6 5.4-7.7"/></svg></div><span>sale.order.line</span></div>
<div class="a row" style="left:33px;top:152px"><div class="cb"></div><span>sale.order.line.invoice.rel</span></div>
<div class="a row" style="left:33px;top:172px"><div class="cb"></div><span>sale.order.option</span></div>
<div class="a row" style="left:33px;top:192px"><div class="cb"></div><span>sale.order.tag.rel</span></div>
<div class="a row" style="left:33px;top:212px"><div class="cb"></div><span>sale.order.template</span></div>
<div class="a row" style="left:33px;top:232px"><div class="cb"></div><span>sale.order.template.line</span></div>
<div class="a row" style="left:33px;top:252px"><div class="cb"></div><span>sale.order.template.option</span></div>
<div class="a row" style="left:33px;top:272px"><div class="cb"></div><span>sale.order.transaction.rel</span></div>
<div class="a row" style="left:33px;top:292px"><div class="cb"></div><span>sale.payment.provider.onboarding.wizard</span></div>
<div class="a row" style="left:33px;top:312px"><div class="cb"></div><span>sms.composer</span></div>
<div class="a row" style="left:33px;top:332px"><div class="cb"></div><span>sms.resend</span></div>
<div class="a row" style="left:33px;top:352px"><div class="cb"></div><span>sms.resend.recipient</span></div>
<div class="a row" style="left:33px;top:372px"><div class="cb"></div><span>sms.sms</span></div>
<div class="a row" style="left:33px;top:392px"><div class="cb"></div><span>sms.template</span></div>
</div>
<div class="a" style="left:510px;top:69px;width:15px;height:400px;background:#f1f1f1"></div>
<svg class="a" style="left:514px;top:74.5px" width="7" height="5" viewBox="0 0 7 5"><path fill="#505050" d="M0 5L3.5 0.5 7 5z"/></svg>
<svg class="a" style="left:514px;top:459px" width="7" height="5" viewBox="0 0 7 5"><path fill="#505050" d="M0 0L3.5 4.5 7 0z"/></svg>
<div class="a" style="left:512px;top:353px;width:11px;height:30px;background:#c1c1c1"></div>
<div class="a" style="left:441px;top:431px;width:51px;height:25px;background:#00a94f;border-radius:3px;color:#fff;font-size:13px;line-height:25px;text-align:center">Submit</div>
</div>
</body></html>
